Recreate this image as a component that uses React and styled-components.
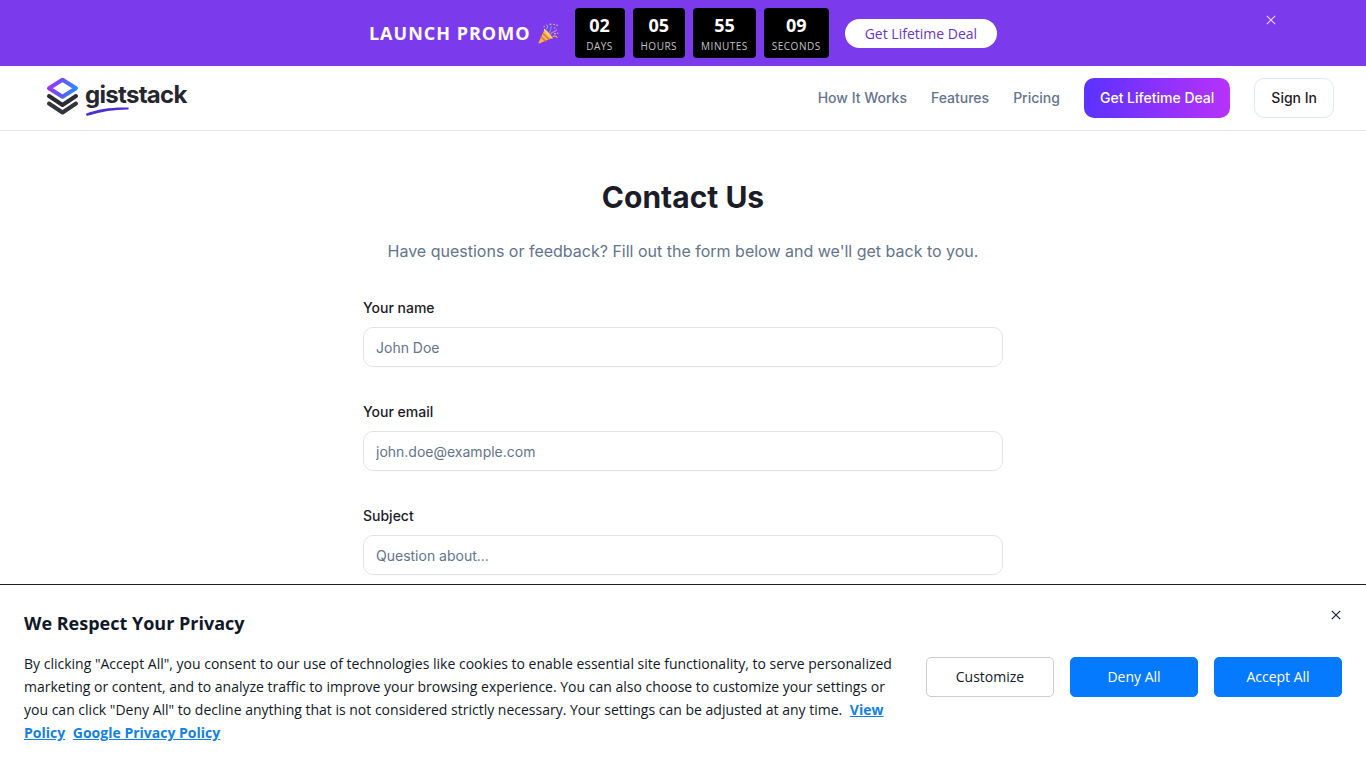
import React, {useState} from 'react'
import styled, {createGlobalStyle, css} from 'styled-components'

const GlobalStyle = createGlobalStyle`
  * {
    box-sizing: border-box;
  }
  body {
    margin: 0;
    background-color: white;
    color: #1c1c28;
    font-family: Inter, "Liberation Sans", sans-serif;
  }
  h1, h2, p {
    margin: 0;
  }
  button, input {
    font-family: inherit;
  }
`

const promoFont = '"Open Sans", "Noto Sans", sans-serif'

const PromoBar = styled.aside`
  position: relative;
  display: flex;
  justify-content: center;
  align-items: center;
  gap: 16px;
  padding: 8px 16px;
  background-color: #7c3aed;
  color: white;
  font-family: ${promoFont};
`;

const PromoTitle = styled.p`
  display: flex;
  align-items: center;
  gap: 7px;
  font-size: 18px;
  font-weight: 700;
  letter-spacing: 1px;
`;

const Countdown = styled.div`
  display: flex;
  gap: 8px;
`;

const TimeBox = styled.div`
  display: flex;
  flex-direction: column;
  align-items: center;
  min-width: 50px;
  height: 50px;
  padding: 6px 8px;
  border-radius: 4px;
  background-color: black;
`;

const TimeValue = styled.span`
  font-size: 18px;
  font-weight: 700;
  line-height: 23px;
`;

const TimeLabel = styled.span`
  font-size: 10px;
  line-height: 18px;
  letter-spacing: 0.5px;
  color: #c4c4c4;
`;

const PromoLink = styled.a`
  padding: 4px 20px;
  border-radius: 16px;
  background-color: white;
  color: #6b35c9;
  font-size: 14px;
  line-height: 21px;
  text-decoration: none;
`;

const CloseButton = styled.button`
  position: absolute;
  top: ${props => props.$top};
  right: ${props => props.$right};
  display: flex;
  padding: 3px;
  border: 0;
  background: none;
  color: ${props => props.$color};
  cursor: pointer;
`;

const Header = styled.header`
  display: flex;
  justify-content: space-between;
  align-items: center;
  height: 65px;
  padding: 0 32px 0 46px;
  border-bottom: 1px solid #e2e4e9;
`;

const Brand = styled.a`
  display: flex;
  align-items: center;
  gap: 6px;
  padding-bottom: 4px;
  color: #26262e;
  text-decoration: none;
`;

const BrandName = styled.span`
  position: relative;
  padding-bottom: 2px;
  font-size: 24px;
  font-weight: 700;
  line-height: 36px;
  letter-spacing: -0.7px;
`;

const Swoosh = styled.svg`
  position: absolute;
  left: 0;
  bottom: -2px;
`;

const Nav = styled.nav`
  display: flex;
  align-items: center;
  gap: 24px;
`;

const NavLink = styled.a`
  padding-bottom: 2px;
  color: #64748b;
  font-size: 14px;
  font-weight: 500;
  text-decoration: none;
`;

const NavButton = styled.button`
  height: 40px;
  padding: 0 16px 2px;
  border: 1px solid #e2e8f0;
  border-radius: 10px;
  background: white;
  color: #1c1c28;
  font-size: 14px;
  font-weight: 500;
  cursor: pointer;

  ${props => props.$primary && css`
    border: 0;
    background: linear-gradient(to right, #5b32ff, #b832fa);
    color: white;
  `}
`;

const Main = styled.main`
  max-width: 672px;
  margin: 0 auto;
  padding: 48px 16px 0;
`;

const Title = styled.h1`
  font-size: 30px;
  font-weight: 700;
  line-height: 36px;
  text-align: center;
`;

const Subtitle = styled.p`
  margin-top: 24px;
  color: #64748b;
  font-size: 16px;
  line-height: 24px;
  text-align: center;
`;

const Form = styled.form`
  display: flex;
  flex-direction: column;
  gap: 36px;
  margin-top: 36px;
`;

const Field = styled.div`
  display: flex;
  flex-direction: column;
  gap: 10px;
`;

const Label = styled.label`
  font-size: 14px;
  font-weight: 500;
  line-height: 18px;
`;

const Input = styled.input`
  width: 100%;
  height: 40px;
  padding: 0 12px;
  border: 1px solid #e0e4ea;
  border-radius: 10px;
  background: white;
  font-size: 14px;

  &::placeholder {
    color: #64748b;
    opacity: 1;
  }
`;

const CookieBanner = styled.section`
  position: fixed;
  left: 0;
  right: 0;
  bottom: 0;
  display: flex;
  align-items: center;
  gap: 32px;
  padding: 24px;
  border-top: 1px solid #1c1c28;
  background-color: white;
  color: #111827;
  font-family: ${promoFont};
`;

const CookieText = styled.div`
  flex: 1;
`;

const CookieTitle = styled.h2`
  font-size: 18px;
  font-weight: 700;
  line-height: 28px;
`;

const CookieBody = styled.p`
  margin-top: 15px;
  font-size: 14px;
  line-height: 23px;
`;

const PolicyLink = styled.a`
  margin-left: 4px;
  color: #1480e0;
  font-weight: 700;
`;

const CookieActions = styled.div`
  display: flex;
  gap: 16px;
`;

const CookieButton = styled.button`
  width: 128px;
  height: 40px;
  padding: 0 0 1px;
  border: 1px solid ${props => props.$solid ? '#057aff' : '#c9ccd3'};
  border-radius: 5px;
  background-color: ${props => props.$solid ? '#057aff' : 'white'};
  color: ${props => props.$solid ? 'white' : '#111827'};
  font-size: 14px;
  cursor: pointer;
`;

const times = [
  {value: '02', label: 'DAYS'},
  {value: '05', label: 'HOURS'},
  {value: '55', label: 'MINUTES'},
  {value: '09', label: 'SECONDS'},
]

const fields = [
  {id: 'name', label: 'Your name', type: 'text', placeholder: 'John Doe'},
  {id: 'email', label: 'Your email', type: 'email', placeholder: 'john.doe@example.com'},
  {id: 'subject', label: 'Subject', type: 'text', placeholder: 'Question about...'},
]

function CloseIcon() {
  return (
    <svg width="10" height="10" viewBox="0 0 10 10" stroke="currentColor" strokeWidth="1.1" fill="none" aria-hidden="true">
      <path d="M0.800 0.800l8.400 8.400M9.200 0.800L0.800 9.200" />
    </svg>
  )
}

function PartyPopper() {
  return (
    <svg width="21" height="21" viewBox="0 0 21 21" fill="none" strokeLinecap="round" role="img" aria-label="Party popper">
      <path d="M6.500 6.500C9.500 7.500 13.500 11.500 14 15L1.200 20.500C0.600 20.700 0.300 20.300 0.500 19.700z" fill="#f9b24a" />
      <path d="M5 10.500l6 5.700M3.200 14.300l4.200 3.700" stroke="#d9733a" strokeWidth="1.3" />
      <path d="M6.500 6.500C8.500 10 11 12.800 14 15" stroke="#f7d79a" strokeWidth="1.4" />
      <path d="M8.500 5.500C10 4.500 9.800 3 8.800 1.800" stroke="#6fa5ee" strokeWidth="1.2" />
      <path d="M11.500 9C13 7.500 12 5.500 13.500 3.500" stroke="#5e92e6" strokeWidth="1.3" />
      <path d="M13 10.500C14.500 8.500 16.500 9.500 18.500 7" stroke="#c98bdc" strokeWidth="1.2" />
      <path d="M15 13.500C16.500 12.500 18 13 19 14.500" stroke="#ef9a5a" strokeWidth="1.3" />
      <g strokeWidth="1.4">
        <path d="M12.300 1.300h.4M16.800 10.800h.4" stroke="#f6cf5a" />
        <path d="M16.500 5h.5M6 3.500h.3" stroke="#ee7d92" />
        <path d="M18.800 2.300h.5M19.500 10.300h.2" stroke="#8fb8f2" />
        <path d="M16 1.500h.3" stroke="#e9a0e0" />
      </g>
    </svg>
  )
}

function Logo() {
  return (
    <Brand href="#" aria-label="giststack">
      <svg width="33" height="38" viewBox="0 0 33 38" fill="none" strokeWidth="4" strokeLinejoin="round" strokeLinecap="round" aria-hidden="true">
        <defs>
          <linearGradient id="logoTop" x1="3" y1="8" x2="30" y2="14" gradientUnits="userSpaceOnUse">
            <stop offset="0" stopColor="#a032f0" />
            <stop offset="0.5" stopColor="#5b5cf6" />
            <stop offset="1" stopColor="#2b8cff" />
          </linearGradient>
        </defs>
        <path d="M3 26.500l13.500 9L30 26.500" stroke="#34343e" />
        <path d="M3 19l13.500 9L30 19" stroke="#2b2b33" />
        <path d="M16.500 2.800L30 11.300l-13.500 8.500L3 11.300z" fill="white" stroke="white" strokeWidth="6.500" />
        <path d="M16.500 2.800L30 11.300l-13.500 8.500L3 11.300z" fill="white" stroke="url(#logoTop)" />
      </svg>
      <BrandName>
        giststack
        <Swoosh width="46" height="10" viewBox="0 0 46 10" aria-hidden="true">
          <path d="M1.500 6.500C13 2 28 0 43 0.600C44.200 0.800 44 2.200 42.800 2.400C29 2.400 16 4.500 3.500 8.500C1 9.500 0.500 7.200 1.500 6.500z" fill="#4b2fd6" />
        </Swoosh>
      </BrandName>
    </Brand>
  )
}

function App() {
  const [promo, setPromo] = useState(true)
  const [cookies, setCookies] = useState(true)

  return (
    <>
      <GlobalStyle />
      {promo && (
        <PromoBar>
          <PromoTitle>LAUNCH PROMO <PartyPopper /></PromoTitle>
          <Countdown>
            {times.map(time => (
              <TimeBox key={time.label}>
                <TimeValue>{time.value}</TimeValue>
                <TimeLabel>{time.label}</TimeLabel>
              </TimeBox>
            ))}
          </Countdown>
          <PromoLink href="#">Get Lifetime Deal</PromoLink>
          <CloseButton $top="12px" $right="87px" $color="#e9d9ff" aria-label="Close promo" onClick={() => setPromo(false)}>
            <CloseIcon />
          </CloseButton>
        </PromoBar>
      )}
      <Header>
        <Logo />
        <Nav>
          <NavLink href="#">How It Works</NavLink>
          <NavLink href="#">Features</NavLink>
          <NavLink href="#">Pricing</NavLink>
          <NavButton $primary>Get Lifetime Deal</NavButton>
          <NavButton>Sign In</NavButton>
        </Nav>
      </Header>
      <Main>
        <Title>Contact Us</Title>
        <Subtitle>Have questions or feedback? Fill out the form below and we'll get back to you.</Subtitle>
        <Form>
          {fields.map(field => (
            <Field key={field.id}>
              <Label htmlFor={field.id}>{field.label}</Label>
              <Input id={field.id} type={field.type} placeholder={field.placeholder} />
            </Field>
          ))}
        </Form>
      </Main>
      {cookies && (
        <CookieBanner>
          <CookieText>
            <CookieTitle>We Respect Your Privacy</CookieTitle>
            <CookieBody>
              By clicking "Accept All", you consent to our use of technologies like cookies to enable essential site functionality, to serve personalized marketing or content, and to analyze traffic to improve your browsing experience. You can also choose to customize your settings or you can click "Deny All" to decline anything that is not considered strictly necessary. Your settings can be adjusted at any time.{' '}
              <PolicyLink href="#">View Policy</PolicyLink>{' '}
              <PolicyLink href="#">Google Privacy Policy</PolicyLink>
            </CookieBody>
          </CookieText>
          <CookieActions>
            <CookieButton>Customize</CookieButton>
            <CookieButton $solid onClick={() => setCookies(false)}>Deny All</CookieButton>
            <CookieButton $solid onClick={() => setCookies(false)}>Accept All</CookieButton>
          </CookieActions>
          <CloseButton $top="22px" $right="22px" $color="#111827" aria-label="Close privacy notice" onClick={() => setCookies(false)}>
            <CloseIcon />
          </CloseButton>
        </CookieBanner>
      )}
    </>
  )
}

export default App
